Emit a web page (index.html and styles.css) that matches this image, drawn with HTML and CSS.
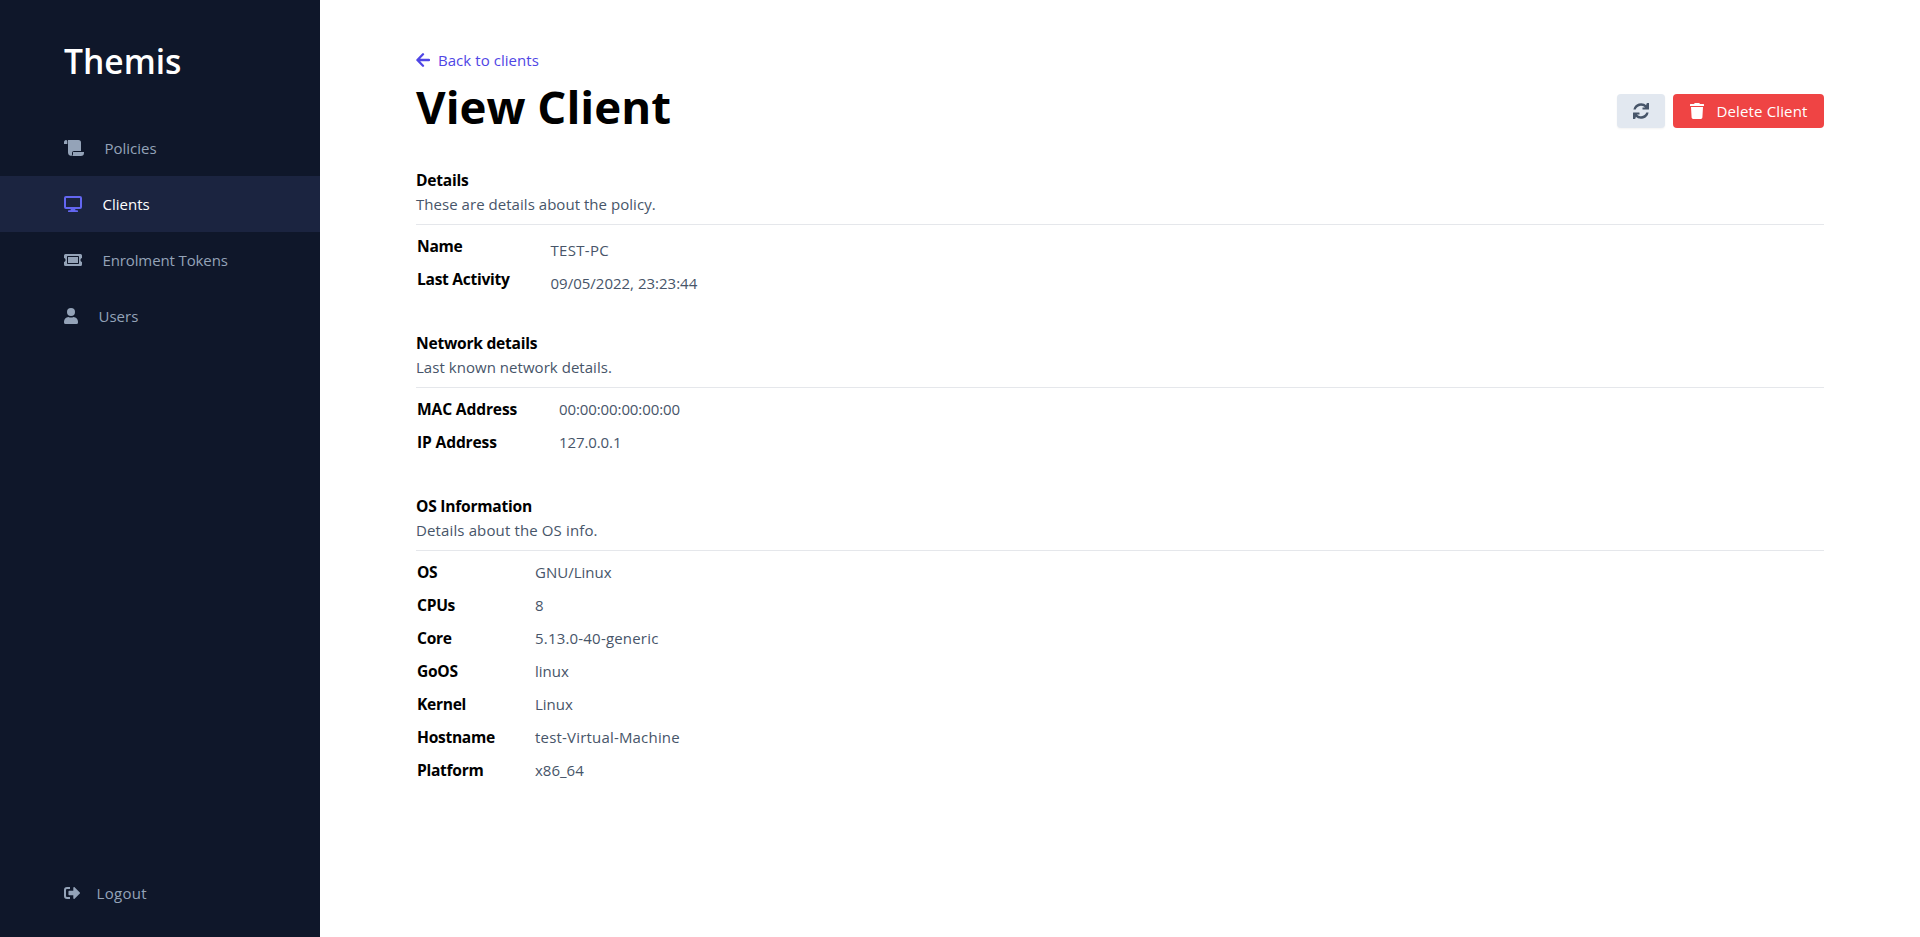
FILE: index.html
```
<!DOCTYPE html>
<html lang="en">
<head>
<meta charset="utf-8">
<title>Themis</title>
<link rel="stylesheet" href="styles.css">
</head>
<body>
<div class="app">
  <aside class="sidebar">
    <div class="brand">Themis</div>
    <nav class="nav">
      <a class="nav-item">
        <svg class="icon" width="20" height="16" viewBox="0 0 20 16"><path d="M0 4V2a1.900 1.900 0 0 1 3.300-1.300V4zM4 0h10.500A2.500 2.500 0 0 1 17 2.500V11H10a2 2 0 0 0-2 2v1.500c0 .9-.3 1.300-.7 1.500C5.300 15.700 4 14.500 4 12.500zM9 12h11v.8A3.200 3.200 0 0 1 16.800 16H7.800C8.600 15.600 9 14.800 9 14z"/></svg>
        <span>Policies</span>
      </a>
      <a class="nav-item active">
        <svg class="icon" width="18" height="16" viewBox="0 0 18 16"><path fill-rule="evenodd" d="M2 0h14a2 2 0 0 1 2 2v9a2 2 0 0 1-2 2h-4.800l.3 1.300H13.200a.85.85 0 0 1 0 1.700H4.800a.85.85 0 0 1 0-1.700H6.500L6.800 13H2a2 2 0 0 1-2-2V2a2 2 0 0 1 2-2zM2 2v9h14V2z"/></svg>
        <span>Clients</span>
      </a>
      <a class="nav-item tokens">
        <svg class="icon" width="18" height="16" viewBox="0 0 18 16"><path fill-rule="evenodd" d="M4 5h10v6H4zM18 6V3.500A1.500 1.500 0 0 0 16.500 2h-15A1.500 1.500 0 0 0 0 3.500V6c1 .1 1.500 1 1.500 2S1 9.900 0 10v2.500A1.500 1.500 0 0 0 1.500 14h15a1.500 1.500 0 0 0 1.500-1.500V10c-1-.1-1.500-1-1.500-2s.5-1.900 1.500-2zM15 11.300a.7.700 0 0 1-.7.700H3.700a.7.700 0 0 1-.7-.7V4.700A.7.700 0 0 1 3.700 4h10.600a.7.700 0 0 1 .7.700z"/></svg>
        <span>Enrolment Tokens</span>
      </a>
      <a class="nav-item">
        <svg class="icon" width="14" height="16" viewBox="0 0 14 16"><circle cx="7" cy="4" r="4"/><path d="M4.500 9C5.300 9.400 6.100 9.600 7 9.600S8.700 9.400 9.500 9C12.300 9 14 11.200 14 13.700v.8a1.500 1.500 0 0 1-1.500 1.500h-11A1.500 1.500 0 0 1 0 14.500v-.8C0 11.200 1.700 9 4.500 9z"/></svg>
        <span>Users</span>
      </a>
    </nav>
    <a class="nav-item logout">
      <svg class="icon" width="16" height="16" viewBox="0 0 16 16"><path d="M6 14H3a3 3 0 0 1-3-3V5a3 3 0 0 1 3-3h3v2H3a1 1 0 0 0-1 1v6a1 1 0 0 0 1 1h3zM15.800 8.500l-5.200 5.200c-.5.500-1.300.1-1.300-.5v-3H5.200a.75.75 0 0 1-.75-.75v-3c0-.4.3-.75.75-.75H9.300v-3c0-.6.800-1 1.300-.5l5.200 5.200c.3.300.3.800 0 1.100z"/></svg>
      <span>Logout</span>
    </a>
  </aside>

  <main class="content">
    <a class="back">
      <svg class="icon arrow" width="14" height="16" viewBox="0 0 14 16"><path d="M7 2.300L1.400 8L7 13.700M1.600 8H13"/></svg>
      <span>Back to clients</span>
    </a>
    <header class="page-head">
      <h1 class="title">View Client</h1>
      <div class="actions">
        <button class="btn refresh" aria-label="Refresh">
          <svg class="icon" width="16" height="16" viewBox="0 0 16 16"><path d="M.4 6.600A7.750 7.750 0 0 1 13.600 2.600L14.300 0H15.600a.4.400 0 0 1 .4.400V6.200a.4.400 0 0 1-.4.400H9.900a.4.400 0 0 1-.4-.4V4.600H12A5.500 5.500 0 0 0 2.700 6.600zM15.600 9.400A7.750 7.750 0 0 1 2.400 13.400L1.700 16H.4a.4.400 0 0 1-.4-.4V9.800a.4.400 0 0 1 .4-.4H6.100a.4.400 0 0 1 .4.400v1.600H4A5.500 5.500 0 0 0 13.300 9.400z"/><path d="M13.500.4L16 0V5H12.800zM2.500 15.600L0 16V11H3.200z"/></svg>
        </button>
        <button class="btn danger">
          <svg class="icon" width="14" height="16" viewBox="0 0 14 16"><path d="M13.500 1H10L9.700.5A.8.800 0 0 0 9 0H5a.8.800 0 0 0-.7.500L4 1H.5a.5.500 0 0 0-.5.500V3h14V1.500a.5.500 0 0 0-.5-.5zM1 4l.6 10.600A1.500 1.500 0 0 0 3.100 16h7.800a1.500 1.500 0 0 0 1.500-1.400L13 4z"/></svg>
          <span>Delete Client</span>
        </button>
      </div>
    </header>

    <section class="section">
      <h2 class="section-title">Details</h2>
      <p class="section-note">These are details about the policy.</p>
      <dl class="facts details">
        <dt>Name</dt><dd class="upper">TEST-PC</dd>
        <dt>Last Activity</dt><dd>09/05/2022, 23:23:44</dd>
      </dl>
    </section>

    <section class="section">
      <h2 class="section-title">Network details</h2>
      <p class="section-note">Last known network details.</p>
      <dl class="facts network">
        <dt>MAC Address</dt><dd>00:00:00:00:00:00</dd>
        <dt>IP Address</dt><dd>127.0.0.1</dd>
      </dl>
    </section>

    <section class="section">
      <h2 class="section-title">OS Information</h2>
      <p class="section-note os-note">Details about the OS info.</p>
      <dl class="facts system">
        <dt>OS</dt><dd>GNU/Linux</dd>
        <dt>CPUs</dt><dd>8</dd>
        <dt>Core</dt><dd class="wide">5.13.0-40-generic</dd>
        <dt>GoOS</dt><dd>linux</dd>
        <dt>Kernel</dt><dd>Linux</dd>
        <dt>Hostname</dt><dd class="wide">test-Virtual-Machine</dd>
        <dt>Platform</dt><dd>x86_64</dd>
      </dl>
    </section>
  </main>
</div>
</body>
</html>
```
FILE: styles.css
```
* { box-sizing: border-box; margin: 0; padding: 0; }

body {
  font: 15px/24px "Open Sans", "Noto Sans", sans-serif;
  color: #000;
  background: #fff;
}

.app { display: flex; height: 937px; }

.icon { display: block; flex: none; fill: currentColor; }

/* Sidebar */
.sidebar {
  display: flex;
  flex-direction: column;
  flex: none;
  width: 320px;
  padding: 41px 0 16px;
  background: #0f172a;
}

.brand {
  height: 79px;
  padding-left: 64px;
  color: #fff;
  font-size: 33.6px;
  font-weight: 600;
  line-height: 40px;
}

.nav { flex: 1; }

.nav-item {
  display: flex;
  align-items: center;
  gap: 20px;
  height: 56px;
  padding-left: 64px;
  color: #94a3b8;
}

.nav-item span { padding-left: 0.5px; }

.active { background: #1b2440; color: #fff; }
.active .icon { color: #6366f1; }
.tokens { letter-spacing: -0.12px; }
.logout { gap: 16px; letter-spacing: 0.3px; }

/* Page */
.content { flex: 1; padding: 48px 96px 0; }

.back {
  display: flex;
  align-items: center;
  gap: 8px;
  color: #4f46e5;
  letter-spacing: 0.05px;
}

.arrow {
  fill: none;
  stroke: currentColor;
  stroke-width: 2.3;
  stroke-linecap: round;
  stroke-linejoin: round;
}

.page-head {
  display: flex;
  justify-content: space-between;
  align-items: flex-start;
  margin-bottom: 27px;
}

.title {
  font-size: 45.6px;
  font-weight: 700;
  line-height: 68px;
  height: 69px;
}

.actions { display: flex; gap: 8px; margin-top: 22px; }

.btn {
  display: flex;
  align-items: center;
  height: 34px;
  border: 0;
  border-radius: 4px;
  font: inherit;
}

.refresh {
  padding: 0 16px;
  background: #e2e8f0;
  color: #475569;
  box-shadow: 0 1px 2px rgba(0, 0, 0, 0.05);
}

.danger {
  gap: 12.5px;
  width: 151px;
  padding-left: 17px;
  background: #ef4444;
  color: #fff;
  letter-spacing: 0.14px;
  white-space: nowrap;
}

.section { margin-bottom: 31px; }

.section-title { font-size: 15.6px; font-weight: 700; line-height: 24px; letter-spacing: -0.25px; }

.section-note {
  padding-bottom: 8px;
  border-bottom: 1px solid #e5e7eb;
  color: #475569;
  letter-spacing: 0.04px;
}

.os-note { letter-spacing: 0.13px; }

.facts {
  display: grid;
  grid-auto-rows: 33px;
  padding: 9px 0 0 1px;
}

.facts dt { font-size: 15.6px; font-weight: 700; letter-spacing: -0.3px; }
.facts dd { color: #475569; }

.details { grid-template-columns: 133.5px 1fr; }
.details dd { padding-top: 4px; }
.details .upper { letter-spacing: 0.3px; }
.network { grid-template-columns: 142px 1fr; letter-spacing: -0.1px; }
.network dt { letter-spacing: -0.15px; }
.system { grid-template-columns: 118px 1fr; }
.system .wide { letter-spacing: 0.19px; }
```
